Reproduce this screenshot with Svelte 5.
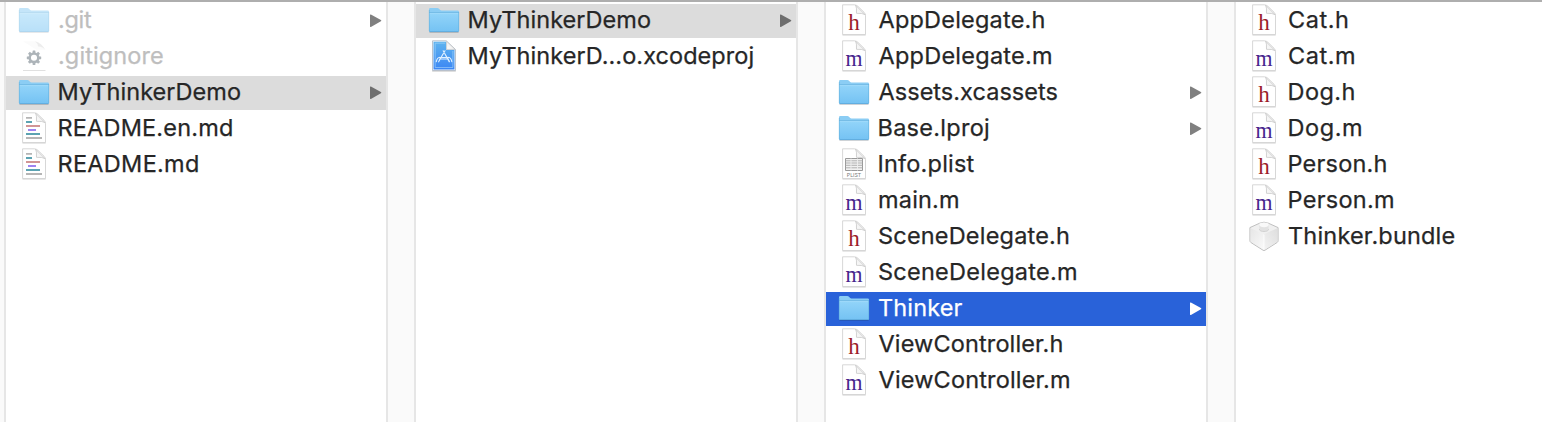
<script>
  const columns = [
    [
      { name: '.git', icon: 'folder', open: true, dim: true, w: 33 },
      { name: '.gitignore', icon: 'gear', dim: true, w: 104 },
      { name: 'MyThinkerDemo', icon: 'folder', open: true, state: 'path', w: 180.5 },
      { name: 'README.en.md', icon: 'text', w: 172.5 },
      { name: 'README.md', icon: 'text', w: 138.5 }
    ],
    [
      { name: 'MyThinkerDemo', icon: 'folder', open: true, state: 'path', w: 180.5 },
      { name: 'MyThinkerD…o.xcodeproj', icon: 'xcode', w: 284 }
    ],
    [
      { name: 'AppDelegate.h', icon: 'h', w: 166 },
      { name: 'AppDelegate.m', icon: 'm', w: 172.5 },
      { name: 'Assets.xcassets', icon: 'folder', open: true, w: 179 },
      { name: 'Base.lproj', icon: 'folder', open: true, w: 109.5 },
      { name: 'Info.plist', icon: 'plist', w: 95 },
      { name: 'main.m', icon: 'm', w: 79 },
      { name: 'SceneDelegate.h', icon: 'h', w: 190 },
      { name: 'SceneDelegate.m', icon: 'm', w: 197 },
      { name: 'Thinker', icon: 'folder', open: true, state: 'active', w: 83.5 },
      { name: 'ViewController.h', icon: 'h', w: 184 },
      { name: 'ViewController.m', icon: 'm', w: 190.5 }
    ],
    [
      { name: 'Cat.h', icon: 'h', w: 59 },
      { name: 'Cat.m', icon: 'm', w: 65 },
      { name: 'Dog.h', icon: 'h', w: 65 },
      { name: 'Dog.m', icon: 'm', w: 71.5 },
      { name: 'Person.h', icon: 'h', w: 97 },
      { name: 'Person.m', icon: 'm', w: 103.5 },
      { name: 'Thinker.bundle', icon: 'bundle', w: 165.5 }
    ]
  ];

  // Tracks each label so its ink is as wide as the given number of pixels.
  function fit(node, width) {
    const ctx = document.createElement('canvas').getContext('2d');
    ctx.font = getComputedStyle(node).font;
    const text = node.textContent;
    const m = ctx.measureText(text);
    const ink = m.actualBoundingBoxRight + m.actualBoundingBoxLeft;
    node.style.letterSpacing = (width - ink) / (text.length - 1) + 'px';
    node.style.marginLeft = m.actualBoundingBoxLeft * 0.5 - 0.5 + 'px';
  }

  const teeth = [0, 45, 90, 135, 180, 225, 270, 315];
</script>

<svg class="defs" aria-hidden="true">
  <defs>
    <linearGradient id="folderFill" x1="0" y1="0" x2="0" y2="1">
      <stop offset="0" stop-color="#92d4f9" /><stop offset="1" stop-color="#74c2f3" />
    </linearGradient>
    <linearGradient id="xcodeFill" x1="0" y1="0" x2="0" y2="1">
      <stop offset="0" stop-color="#5fb4ef" /><stop offset="1" stop-color="#3b86f4" />
    </linearGradient>
    <linearGradient id="foldFill" x1="0" y1="1" x2="1" y2="0">
      <stop offset="0" stop-color="#fff" /><stop offset="1" stop-color="#e2e2e2" />
    </linearGradient>
    <linearGradient id="leftFace" x1="0" y1="0" x2="1" y2="1">
      <stop offset="0" stop-color="#e6e6e6" /><stop offset="1" stop-color="#fafafa" />
    </linearGradient>
    <linearGradient id="rightFace" x1="1" y1="0" x2="0" y2="1">
      <stop offset="0" stop-color="#dedede" /><stop offset="1" stop-color="#f3f3f3" />
    </linearGradient>
  </defs>
</svg>

{#snippet page()}
  <path d="M5.5 31.1h23.2" stroke="#000" stroke-opacity=".16" />
  <path d="M5.6 .8h11.9Q19.6 1 21 2.4L27 8.2q1.5 1.5 1.5 3.6v18.7H5.6z" fill="#fff" stroke="#cdcdcd" stroke-width=".8" />
  <path d="M18.6 1.2q1.2 2 .9 8.1 6.2-.3 8.6 1.4z" fill="url(#foldFill)" stroke="#c8c8c8" stroke-width=".8" stroke-linejoin="round" />
{/snippet}

{#snippet icon(kind)}
  <svg class="icon" viewBox="0 0 34 34" aria-hidden="true">
    {#if kind === 'folder'}
      <path d="M2.5 28.3h29" stroke="#000" stroke-opacity=".2" />
      <path d="M2 5.2q0-1.2 1.2-1.2h7.2q.8 0 1.3.6l1.5 1.5q.4.4 1.2.4h16.4q1.2 0 1.2 1.2v3H2z" fill="#8bcdf4" />
      <path d="M2 9h30v17.8q0 1.2-1.2 1.2H3.2Q2 28 2 26.8z" fill="url(#folderFill)" />
      <path d="M2 8.7h30" stroke="#6cb4df" stroke-width=".8" />
      <path d="M2.4 9.6h29.2" stroke="#a5dcfa" stroke-width=".8" />
      <path d="M2.4 27.6h29.2" stroke="#5aa6d8" stroke-width=".8" />
      <path d="M2.3 6v21M31.7 8v19" stroke="#62aedb" stroke-width=".6" />
    {:else if kind === 'gear'}
      <path d="M6 1.3h13q5 1 9 8.4H19.5z" fill="#fbfbfb" />
      <path d="M18 1.2q6.500 1.500 10.600 9-3-3.800-7.500-3.700-.4-3.200-3.100-5.300z" fill="#ededed" />
      <path d="M6 30.5h22.5" stroke="#e0e0e0" />
      <g transform="translate(17 17.8)">
        <circle r="4.3" fill="none" stroke="#adb4b9" stroke-width="2.5" />
        {#each teeth as a}
          <rect x="-1.4" y="-7.2" width="2.8" height="2.6" rx=".4" fill="#adb4b9" transform="rotate({a})" />
        {/each}
      </g>
    {:else if kind === 'xcode'}
      <path d="M5.2 31.1h23.6" stroke="#000" stroke-opacity=".22" />
      <path d="M5.5 .8h13.700L28.5 9.500v21h-23z" fill="#f5faff" stroke="#a9b4c0" stroke-width=".8" />
      <path d="M6.500 1.800h12.700v7.900h8.300v19.900h-21z" fill="url(#xcodeFill)" />
      <path d="M19.600 1.300v8.100h8.500z" fill="url(#foldFill)" stroke="#bbb" stroke-width=".6" />
      <path d="M8.2 3.2h10M8.2 3.2v24.300h17.700V11" fill="none" stroke="#a9d6fa" stroke-width=".6" />
      <g fill="none" stroke="#e0f0ff" stroke-width="1.1" stroke-linecap="round">
        <path d="M16.200 10.800l6 11M18 10.800l-6.400 11M18 14l4.500 7.500M16 14l-4 7M12.500 17.500h9.500M12.500 19h9" />
        <path d="M9.300 21.600q.8-4 3.700-4.300M24.800 21.600q-.8-4-3.700-4.300" />
      </g>
    {:else if kind === 'bundle'}
      <path d="M2.9 7.6L12.6 3.200q4.4-2 8.800 0l9.700 4.400v13q0 1.200-1 1.900L18 30.200q-1 .7-2 0L3.900 22.500q-1-.7-1-1.900z" fill="#f0f0f0" stroke="#b9b9b9" stroke-width=".9" />
      <path d="M3.600 8.200L17 14.200v15.700L4.400 22q-.8-.6-.8-1.500z" fill="url(#leftFace)" />
      <path d="M30.4 8.200L17 14.200v15.700L29.600 22q.8-.6.8-1.500z" fill="url(#rightFace)" />
      <path d="M17 14.600V29" stroke="#fff" stroke-width=".8" />
      <path d="M12.400 5v4.500c0 2.800 9.200 2.800 9.200 0V5z" fill="#e2e2e2" />
      <path d="M12.400 9.200c0 3.100 9.200 3.100 9.200 0" fill="none" stroke="#cfcfcf" stroke-width=".9" />
      <ellipse cx="17" cy="4.800" rx="4.600" ry="2.400" fill="#f9f9f9" />
    {:else}
      {@render page()}
      {#if kind === 'h'}
        <text class="letter" x="17" y="26" font-size="24" fill="#9b1c2a" textLength="11.5" lengthAdjust="spacingAndGlyphs">h</text>
      {:else if kind === 'm'}
        <text class="letter" x="17" y="26" font-size="23" fill="#46248c" textLength="17" lengthAdjust="spacingAndGlyphs">m</text>
      {:else if kind === 'text'}
        <g stroke-width="1.9">
          <path d="M9 5.9h6M9 26h16" stroke="#b5b5b5" />
          <path d="M9 10h6M9 22h14" stroke="#5ca3b2" />
          <path d="M9 14h14" stroke="#cf9090" />
          <path d="M11 18h8" stroke="#9a7df0" />
        </g>
      {:else if kind === 'plist'}
        <path d="M8.5 10.5h17v12h-17z" fill="#f1f1f1" stroke="#999" />
        <path d="M8.5 12.8h17M8.5 15h17M8.5 17.3h17M8.5 19.8h17" stroke="#aaa" stroke-width=".9" />
        <path d="M14 10.5v12M20.5 10.5v12" stroke="#eee" stroke-width=".9" />
        <text class="tag" x="17" y="28.8">PLIST</text>
      {/if}
    {/if}
  </svg>
{/snippet}

<main class="browser">
  {#each columns as items}
    <ul class="column">
      {#each items as item}
        <li class="row {item.state ?? ''}" class:dim={item.dim}>
          <span class="art">{@render icon(item.icon)}</span>
          <span class="name" use:fit={item.w}>{item.name}</span>
          {#if item.open}
            <svg class="arrow" viewBox="0 0 13 16" aria-hidden="true"><path d="M1 2.1q0-1 .9-.6l10 5.5q1 .7 0 1.3l-10 5.6q-.9.4-.9-.6z" /></svg>
          {/if}
        </li>
      {/each}
    </ul>
  {/each}
</main>

<style>
  :global(body) { background: #fff; overflow: hidden; }
  .defs { position: absolute; width: 0; height: 0; }
  .browser {
    box-sizing: border-box;
    width: 1542px;
    height: 422px;
    display: flex;
    gap: 26px;
    padding-left: 4px;
    overflow: hidden;
    background: #fafafa;
    border-top: 2px solid #aeaeae;
    font-family: Inter, "Liberation Sans", sans-serif;
  }
  .column {
    flex: 0 0 380px;
    margin: 0;
    padding: 2px 0 0;
    list-style: none;
    background: #fff;
    border: solid #e6e6e6;
    border-width: 0 2px;
  }
  .row {
    display: flex;
    align-items: center;
    height: 34px;
    margin-bottom: 2px;
    padding: 0 4px 0 11px;
    color: #262626;
  }
  .path { background: #dcdcdc; }
  .active { background: #2962d9; color: #fff; }
  .art { width: 42px; height: 34px; }
  .icon { display: block; width: 34px; height: 34px; }
  .name {
    padding-bottom: 2px;
    font-size: 23.5px;
    line-height: 32px;
    white-space: nowrap;
    -webkit-text-stroke: .25px currentColor;
  }
  .arrow { width: 13px; height: 16px; margin: 0 0 1px auto; fill: #808080; }
  .path .arrow { fill: #6e6e6e; }
  .active .arrow { fill: #fff; }
  .dim .name { color: #bebebe; }
  .dim .art { opacity: .5; }
  .dim:nth-child(2) .art { opacity: 1; }
  .letter { font-family: "Liberation Serif", serif; text-anchor: middle; }
  .tag { font: 5.2px Inter, sans-serif; fill: #777; text-anchor: middle; }
</style>
